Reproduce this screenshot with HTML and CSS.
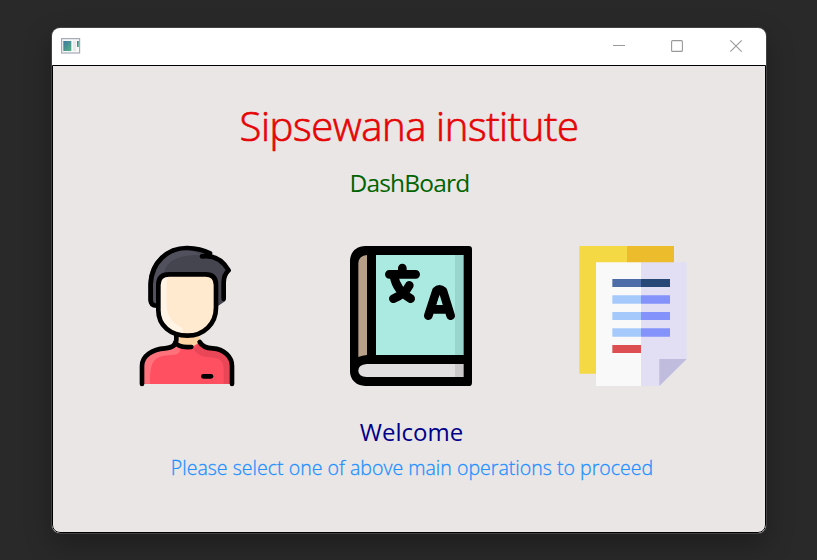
FILE: index.html
```html
<!DOCTYPE html>
<html lang="en">
<head>
<meta charset="utf-8">
<title>Sipsewana institute</title>
<link rel="stylesheet" href="styles.css">
</head>
<body>
<div class="window">
  <header class="titlebar">
    <svg class="app-icon" width="20" height="17" viewBox="0 0 20 17">
      <defs><linearGradient id="pane" x1="0" y1="0" x2="1" y2="1"><stop offset="0" stop-color="#3c78a0"/><stop offset="1" stop-color="#55b184"/></linearGradient></defs>
      <rect x=".6" y=".6" width="18" height="14.4" fill="#f7f7f8" stroke="#a6abb8" stroke-width="1.2"/>
      <rect x="2.3" y="3" width="8" height="10" fill="url(#pane)"/>
      <rect x="12" y="3" width="3" height="10" fill="#e9e9eb"/>
      <rect x="16" y="3" width="1.8" height="6" fill="url(#pane)"/>
    </svg>
    <div class="controls">
      <svg width="12" height="14" viewBox="0 0 12 14"><path d="M1 6.5H13" stroke="#999" fill="none"/></svg>
      <svg width="12" height="14" viewBox="0 0 12 14"><rect x=".6" y="1.6" width="10.8" height="10.8" rx="1" stroke="#999" stroke-width="1.1" fill="none"/></svg>
      <svg width="12" height="14" viewBox="0 0 12 14"><path d="M.3 1.3L11.7 12.7M11.7 1.3L.3 12.7" stroke="#999" stroke-width="1.1" fill="none"/></svg>
    </div>
  </header>
  <main class="content">
    <h1 class="title"><span>Sipsewana institute</span></h1>
    <h2 class="subtitle"><span>DashBoard</span></h2>
    <nav class="operations">
      <svg class="student" width="115" height="160" viewBox="0 0 345 480">
        <path d="M55 196V150C55 80 105 36 170 36Q212 36 243 57L238 65Q276 72 301 105L285 135V199L264 213L80 216Q57 216 55 196Z" fill="#45454f"/>
        <path d="M57 201V145C62 85 110 43 170 42L218 60C145 57 110 77 103 112Q80 126 79 150V212Q62 210 57 201Z" fill="#51515e"/>
        <path d="M139 296H205L212 326Q200 343 175 341Q145 345 133 325Z" fill="#ffd3a2"/>
        <path d="M36 447V395C36 354 75 340 110 340L136 324Q150 338 185 336L210 322Q224 339 251 340C282 342 306 366 306 393V447Z" fill="#ff5062"/>
        <path d="M42 446V395C42 362 75 346 109 345L136 330Q157 341 148 352C137 365 113 357 89 366C66 375 60 395 60 446Z" fill="#ff727c"/>
        <path d="M191 342L209 325Q224 342 251 344C280 346 299 368 299 396V446H281V400C281 383 272 369 249 368C218 366 202 361 191 342Z" fill="#e94757"/>
        <path d="M85 226V150Q85 118 118 118H226Q258 118 258 150V218C258 265 222 302 172 302C122 302 85 272 85 226Z" fill="#ffead0"/>
        <path d="M91 226V151Q91 125 114 125Q109 135 110 154V210C110 245 131 267 152 275Q162 283 155 295C119 288 91 263 91 226Z" fill="#fff4e5"/>
        <g class="outline">
          <path d="M80 212Q62 212 62 194V147C65 82 112 38 172 39Q211 40 240 55Q224 65 216 64Q267 57 296 106Q281 119 281 143V192"/>
          <path d="M85 226V150Q85 118 118 118H226Q258 118 258 150V218C258 265 222 302 172 302C122 302 85 272 85 226Z"/>
          <path d="M139 301V315Q137 338 105 340C67 342 36 363 36 393V447M136 322Q144 339 184 336M209 321Q219 339 248 340C282 342 306 366 306 393V447"/>
          <path d="M220 424H243"/>
        </g>
      </svg>
      <svg class="course" width="145" height="160" viewBox="0 0 435 480">
        <path d="M76 33H386Q396 33 396 43V443Q396 453 386 453H76C48 453 30 433 30 409V79C30 51 49 33 76 33Z"/>
        <path d="M81 60V360Q66 361 55 366V84Q57 62 81 60Z" fill="#b79f88"/>
        <path d="M108 60H345V360H108Z" fill="#abeae0"/>
        <path d="M345 60H371V360H345Z" fill="#98d5cd"/>
        <path d="M80 387H345V426H80Q55 424 55 407Q55 389 80 387Z" fill="#e1dfe0"/>
        <path d="M345 387H371V426H345Z" fill="#cbc9ca"/>
        <path d="M187 99V116M148 118H227M162 124Q170 168 212 191M208 151Q196 176 160 191" fill="none" stroke="#000" stroke-width="26" stroke-linecap="round"/>
        <path d="M265 242L289 168Q298 158 309 168L332 242M277 223H320" fill="none" stroke="#000" stroke-width="26" stroke-linecap="round" stroke-linejoin="round"/>
        <path d="M298 184L306 210H290Z" fill="#abeae0"/>
      </svg>
      <svg class="registration" width="130" height="160" viewBox="0 0 390 480">
        <path d="M28 33H171V416H28Z" fill="#f5d944"/>
        <path d="M171 33H312V100H171Z" fill="#ecbc2d"/>
        <path d="M78 82H213V453H78Z" fill="#f9f9f9"/>
        <path d="M213 82H350V371L268 453H213Z" fill="#e2dff4"/>
        <path d="M268 372H350L268 453Z" fill="#bfbcdd"/>
        <path d="M127 132H213V156H127Z" fill="#4e6ca7"/><path d="M213 132H300V156H213Z" fill="#274877"/>
        <path d="M127 181H213V206H127ZM127 231H213V255H127ZM127 280H213V305H127Z" fill="#a6c9fb"/>
        <path d="M213 181H300V206H213ZM213 231H300V255H213ZM213 280H300V305H213Z" fill="#8493fc"/>
        <path d="M127 330H213V354H127Z" fill="#dc4e50"/>
      </svg>
    </nav>
    <p class="welcome"><span>Welcome</span></p>
    <p class="hint"><span>Please select one of above main operations to proceed</span></p>
  </main>
</div>
</body>
</html>
```
FILE: styles.css
```css
* { box-sizing: border-box; }
body {
  margin: 0;
  height: 560px;
  padding: 28px 51px 27px 52px;
  overflow: hidden;
  background: #292929;
  font-family: "Open Sans", "Noto Sans", sans-serif;
}
.window {
  width: 714px;
  height: 505px;
  border-radius: 8px;
  overflow: hidden;
  background: #fff;
  box-shadow: 0 0 0 1px #424242, 0 10px 28px rgba(0, 0, 0, .3);
}
.titlebar {
  height: 37px;
  display: flex;
  justify-content: space-between;
  align-items: flex-start;
  padding: 10px 24px 0 9px;
}
.controls { display: flex; gap: 47px; padding-top: 1px; }
.controls svg { display: block; overflow: visible; }
.content {
  height: 468px;
  border: 1px solid #000;
  border-radius: 0 0 8px 8px;
  background: #eae6e5;
  padding-top: 32px;
}
h1, h2, p { margin: 0; font-weight: 400; text-align: center; white-space: nowrap; }
.title { height: 56px; line-height: 56px; font-size: 40px; font-weight: 300; letter-spacing: -.4px; -webkit-text-stroke: .7px; color: #e60505; }
.subtitle { height: 36px; line-height: 36px; margin-top: 11px; font-size: 24.5px; letter-spacing: -.8px; color: #006400; padding-left: 1px; }
.operations { display: flex; margin-top: 34px; padding-left: 77px; }
.operations svg { display: block; flex: none; }
.course { margin-left: 95px; }
.registration { margin-left: 85px; }
.outline { fill: none; stroke: #000; stroke-width: 14; stroke-linecap: round; stroke-linejoin: round; }
.welcome { height: 36px; line-height: 36px; margin-top: 19px; font-size: 24px; color: #00008b; padding-left: 5px; }
.hint { height: 30px; line-height: 30px; margin-top: 3px; font-size: 19.5px; font-weight: 300; letter-spacing: .03px; -webkit-text-stroke: .3px; color: #1e90ff; padding-left: 6px; }
```
